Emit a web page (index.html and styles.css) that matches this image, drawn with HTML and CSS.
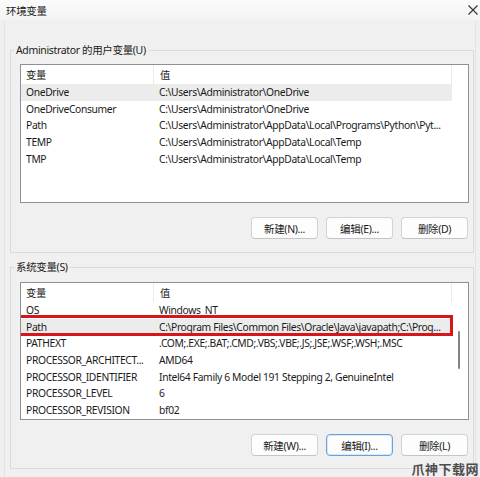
FILE: index.html
```html
<!DOCTYPE html>
<html lang="zh-CN">
<head>
    <meta charset="UTF-8">
    <title>环境变量</title>
    <link rel="stylesheet" href="styles.css">
</head>
<body>
    <div class="titlebar">
        <span class="title">环境变量</span>
        <span class="close">
            <svg width="10" height="10" viewBox="0 0 10 10"><path d="M0.5 0.5 L9.5 9.5 M9.5 0.5 L0.5 9.5" stroke="#333" stroke-width="1.1"/></svg>
        </span>
    </div>

    <div class="window">
        <fieldset class="group group-user">
            <legend>Administrator 的用户变量(U)</legend>
            <div class="listbox list-user">
                <div class="rows">
                    <div class="row head"><span class="name">变量</span><span class="value">值</span></div>
                    <div class="row selected"><span class="name">OneDrive</span><span class="value">C:\Users\Administrator\OneDrive</span></div>
                    <div class="row"><span class="name">OneDriveConsumer</span><span class="value">C:\Users\Administrator\OneDrive</span></div>
                    <div class="row"><span class="name">Path</span><span class="value">C:\Users\Administrator\AppData\Local\Programs\Python\Pyt...</span></div>
                    <div class="row"><span class="name">TEMP</span><span class="value">C:\Users\Administrator\AppData\Local\Temp</span></div>
                    <div class="row"><span class="name">TMP</span><span class="value">C:\Users\Administrator\AppData\Local\Temp</span></div>
                </div>
                <div class="gutter"></div>
            </div>
            <div class="buttons">
                <button>新建(N)...</button>
                <button>编辑(E)...</button>
                <button>删除(D)</button>
            </div>
        </fieldset>

        <fieldset class="group group-system">
            <legend>系统变量(S)</legend>
            <div class="listbox list-system">
                <div class="rows">
                    <div class="row head"><span class="name">变量</span><span class="value">值</span></div>
                    <div class="row"><span class="name">OS</span><span class="value">Windows_NT</span></div>
                    <div class="row selected marked"><span class="name">Path</span><span class="value">C:\Program Files\Common Files\Oracle\Java\javapath;C:\Prog...</span></div>
                    <div class="row"><span class="name">PATHEXT</span><span class="value">.COM;.EXE;.BAT;.CMD;.VBS;.VBE;.JS;.JSE;.WSF;.WSH;.MSC</span></div>
                    <div class="row"><span class="name">PROCESSOR_ARCHITECT...</span><span class="value">AMD64</span></div>
                    <div class="row"><span class="name">PROCESSOR_IDENTIFIER</span><span class="value">Intel64 Family 6 Model 191 Stepping 2, GenuineIntel</span></div>
                    <div class="row"><span class="name">PROCESSOR_LEVEL</span><span class="value">6</span></div>
                    <div class="row"><span class="name">PROCESSOR_REVISION</span><span class="value">bf02</span></div>
                </div>
                <div class="gutter"><div class="thumb"></div></div>
            </div>
            <div class="buttons">
                <button>新建(W)...</button>
                <button class="focused">编辑(I)...</button>
                <button>删除(L)</button>
            </div>
        </fieldset>
    </div>

    <div class="watermark">爪神下载网</div>
</body>
</html>
```

FILE: styles.css
```css
* {
    box-sizing: border-box;
}

html, body {
    margin: 0;
    padding: 0;
}

body {
    width: 480px;
    height: 477px;
    overflow: hidden;
    position: relative;
    background: #f0f0f0;
    color: #1a1a1a;
    font-family: 'Noto Sans', 'Noto Sans CJK SC', sans-serif;
    font-size: 10.3px;
    letter-spacing: -0.35px;
}

.titlebar {
    height: 20px;
    display: flex;
    align-items: center;
    justify-content: space-between;
    padding: 0 2px 0 6px;
    background: linear-gradient(#fbfbfb, #f3f3f3);
}

.title {
    font-size: 10.5px;
}

.close {
    display: flex;
    width: 10px;
    height: 10px;
}

.window {
    margin: 0 4px;
    height: 457px;
    border-left: 1px solid #e4e4e4;
    border-right: 1px solid #e4e4e4;
    padding-top: 22px;
}

.group {
    margin: 0 1px 0 5px;
    padding: 6px 4px 13px 9px;
    border: 1px solid #dadada;
    min-width: 0;
}

.group legend {
    margin-left: -6px;
    padding: 0 2px;
    line-height: 16px;
    font-size: 10.5px;
}

.group-system {
    margin-top: 6px;
    padding-top: 7px;
    padding-bottom: 12px;
}

.listbox {
    position: relative;
    display: flex;
    background: #fff;
    border: 1px solid #8e9096;
    overflow: hidden;
}

.list-user {
    height: 139px;
}

.list-system {
    height: 138px;
}

.rows {
    width: 431px;
}

.gutter {
    flex: 1;
    position: relative;
}

.thumb {
    position: absolute;
    left: 6px;
    top: 48px;
    width: 2px;
    height: 38px;
    background: #858585;
    border-radius: 1px;
}

.row {
    display: flex;
    height: 16.6px;
    align-items: center;
    white-space: nowrap;
}

.row.head {
    height: 19px;
}

.row.selected {
    background: #ececec;
}

.row.marked {
    position: relative;
}

.row.marked::after {
    content: '';
    position: absolute;
    left: -3px;
    right: -1px;
    top: -4px;
    bottom: -1px;
    border: 3px solid #d7161c;
}

.name {
    width: 132px;
    padding-left: 5px;
    overflow: hidden;
}

.value {
    flex: 1;
    padding-left: 6px;
    padding-right: 1px;
    overflow: hidden;
    text-overflow: ellipsis;
}

.head .value {
    border-left: 1px solid #ebebeb;
    border-right: 1px solid #ebebeb;
    height: 100%;
    display: flex;
    align-items: center;
}

.head .name {
    height: 100%;
    display: flex;
    align-items: center;
}

.buttons {
    display: flex;
    justify-content: flex-end;
    gap: 8px;
    margin-top: 14px;
    padding-right: 1px;
}

button {
    width: 67px;
    height: 22px;
    padding: 0;
    font-family: inherit;
    font-size: 10.5px;
    letter-spacing: -0.35px;
    color: #1a1a1a;
    background: #fdfdfd;
    border: 1px solid #d3d3d3;
    border-bottom-color: #c4c4c4;
    border-radius: 4px;
}

button.focused {
    border: 1px solid #6aa2d8;
    box-shadow: inset 0 0 0 1px #d9e8f6;
}

.watermark {
    position: absolute;
    right: 1px;
    bottom: 0;
    font-size: 13px;
    line-height: 16px;
    font-weight: bold;
    color: #4d4d4d;
    letter-spacing: 0.5px;
}
```
